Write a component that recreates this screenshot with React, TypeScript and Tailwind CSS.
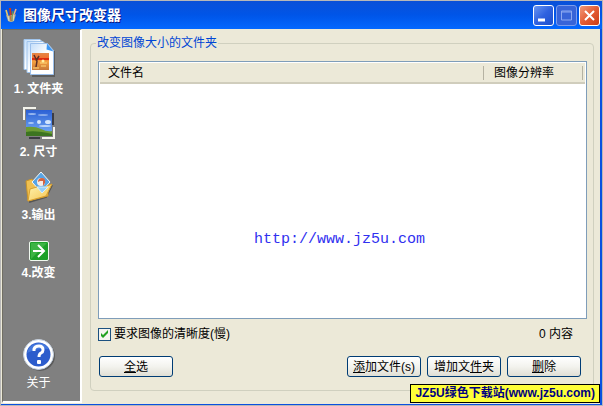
import type { ReactNode } from 'react';

const steps = [
  { id: 'folder', label: '1. 文件夹', icon: <FilesIcon />, box: 'h-[68px]' },
  { id: 'size', label: '2. 尺寸', icon: <SizeIcon />, box: 'h-16' },
  { id: 'output', label: '3.输出', icon: <OutputIcon />, box: 'h-[70px]' },
  { id: 'convert', label: '4.改变', icon: <ConvertIcon />, box: 'h-10' },
];

function BrushIcon() {
  return (
    <svg width="12" height="16" viewBox="0 0 12 16" aria-hidden="true">
      <path d="M1 3l2 7" stroke="#e8c868" strokeWidth="1.6" />
      <path d="M5 1l1 9" stroke="#c83c18" strokeWidth="2" />
      <path d="M11 2L8 10" stroke="#f0b080" strokeWidth="1.6" />
      <path d="M8 4l-1 6" stroke="#70a838" />
      <path d="M1 8l2 6q3 2 6 0l2-7-3 2-2-1-2 1z" fill="#b4ac8c" />
      <path d="M3 9l1 5M9 8l-1 6" stroke="#dcdcc0" />
      <path d="M5 8l1 6" stroke="#c86830" />
      <path d="M7 9v5" stroke="#789048" />
    </svg>
  );
}

function FilesIcon() {
  return (
    <svg width="32" height="38" viewBox="0 0 32 38" aria-hidden="true">
      <defs>
        <linearGradient id="paper" x1="0" y1="0" x2="1" y2="1">
          <stop offset="0" stopColor="#c4defa" />
          <stop offset="0.5" stopColor="#ffffff" />
        </linearGradient>
        <linearGradient id="sunset" x1="0" y1="0" x2="0" y2="1">
          <stop offset="0" stopColor="#e48848" />
          <stop offset="0.3" stopColor="#f07030" />
          <stop offset="0.5" stopColor="#f4a040" />
          <stop offset="1" stopColor="#c87838" />
        </linearGradient>
      </defs>
      <path d="M9 37h22V12" fill="none" stroke="#5c5c5c" strokeWidth="2" />
      <path d="M1 .5h16l5 5v25H1z" fill="url(#paper)" stroke="#a0c4ec" />
      <path d="M4 2.500h16l5 5v26H4z" fill="url(#paper)" stroke="#a0c4ec" />
      <path d="M7.500 4.500h17l6 7v24h-23z" fill="url(#paper)" stroke="#9cc0ec" />
      <path d="M24 4.500l6.500 8-7-2z" fill="#3c98f4" />
      <rect x="9" y="14" width="17" height="17" fill="url(#sunset)" />
      <path d="M9 20h17" stroke="#dc2c10" strokeWidth="2" />
      <path d="M11 16l3 6-1 6M16 17l-3 5" fill="none" stroke="#5c3028" strokeWidth="1.5" />
      <path d="M17 24h7M18 27h5M10 29h6" stroke="#ffd878" />
      <circle cx="20" cy="22" r="1.500" fill="#fff0a0" />
    </svg>
  );
}

function SizeIcon() {
  return (
    <svg width="32" height="33" viewBox="0 0 32 33" aria-hidden="true">
      <defs>
        <linearGradient id="sky" x1="0" y1="0" x2="0" y2="1">
          <stop offset="0" stopColor="#2c60d4" />
          <stop offset="1" stopColor="#78b0f8" />
        </linearGradient>
      </defs>
      <path d="M6 31h11M30 6v12" stroke="#3c3c44" strokeWidth="2" />
      <rect x="3" y="3" width="26" height="26" fill="url(#sky)" />
      <g fill="#d4e6fc">
        <ellipse cx="9" cy="7" rx="4" ry="1" opacity=".6" />
        <ellipse cx="20" cy="8" rx="5" ry="1" opacity=".5" />
        <ellipse cx="16" cy="15" rx="2" ry="2" />
        <ellipse cx="25" cy="15" rx="3" ry="2" />
        <ellipse cx="8" cy="16" rx="3" ry="1" opacity=".7" />
        <ellipse cx="22" cy="19" rx="6" ry="1" opacity=".8" />
      </g>
      <path d="M3 20q9-1 15 2t11 2v5H3z" fill="#6c9c34" />
      <path d="M3 25q9-2 26 2v2H3z" fill="#3c7420" />
      <path d="M1 13V1h12M19 31h12V20" fill="none" stroke="#f4f4ec" strokeWidth="2" />
    </svg>
  );
}

function OutputIcon() {
  return (
    <svg width="28" height="32" viewBox="0 0 28 32" aria-hidden="true">
      <defs>
        <linearGradient id="flap" x1="0" y1="0" x2="1" y2="1">
          <stop offset="0" stopColor="#fff4b0" />
          <stop offset="1" stopColor="#f4c450" />
        </linearGradient>
      </defs>
      <path d="M4 31l17-5 6-12" fill="none" stroke="#555" strokeWidth="2" />
      <path d="M1 10l6-2 2 3 14 1v13L3 30z" fill="#f0c050" stroke="#c89428" />
      <path d="M16 1l9 10-9 10-9-10z" fill="#58a4e4" stroke="#f4f8fc" />
      <circle cx="16" cy="11" r="4" fill="#f8ece4" />
      <path d="M13 11q0-4 4-4t3 5l-2 3v-5h-3z" fill="#d46440" />
      <path d="M3 30L5 18l7-2 3 2 12-5-6 12z" fill="url(#flap)" stroke="#d8a030" />
      <path d="M12 16h11l-6 6z" fill="#98d0f8" stroke="#d8f0fc" />
    </svg>
  );
}

function ConvertIcon() {
  return (
    <svg width="20" height="20" viewBox="0 0 20 20" aria-hidden="true">
      <rect x=".5" y=".5" width="19" height="19" rx="1.5" fill="#1ca028" stroke="#f0f8f0" />
      <path d="M2 2h16L2 18z" fill="#3cb444" />
      <path d="M4 10h11M9 4l6 6-6 6" fill="none" stroke="#fff" strokeWidth="2" />
    </svg>
  );
}

function HelpIcon() {
  return (
    <svg width="32" height="32" viewBox="0 0 32 32" aria-hidden="true">
      <circle cx="17" cy="17" r="15" fill="#5c5c5c" />
      <circle cx="15.5" cy="15.5" r="15" fill="#fff" stroke="#c4d0e0" />
      <circle cx="15.5" cy="15.5" r="12" fill="#2c5ccc" />
      <path d="M4 14a12 12 0 0 1 22-4Q15 9 4 14z" fill="#4478dc" />
      <path d="M11 12V10q1-3 5-3t4 4q0 2-2 3t-2 4" fill="none" stroke="#fff" strokeWidth="3" />
      <rect x="14" y="21" width="4" height="4" rx="1" fill="#fff" />
    </svg>
  );
}

function CaptionButton({ label, className, children }: { label: string; className: string; children: ReactNode }) {
  return (
    <button aria-label={label} className={`flex size-[21px] items-center justify-center rounded-[3px] border ${className}`}>
      <svg width="19" height="19" viewBox="0 0 19 19" fill="none" aria-hidden="true">
        {children}
      </svg>
    </button>
  );
}

function PushButton({ children }: { children: ReactNode }) {
  return (
    <button className="h-[21px] w-[74px] rounded-[3px] border border-[#003c74] bg-linear-to-b from-white via-[#f3f3ee] to-[#e0dfd5] text-center leading-[18px] whitespace-nowrap">
      {children}
    </button>
  );
}

export default function App() {
  return (
    <div className="relative flex min-h-screen flex-col border border-[#b8b8b8] bg-[#0a50e0] font-['Liberation_Sans','Noto_Sans_CJK_SC',sans-serif] text-xs text-black">
      <header className="flex h-7 items-center gap-1.5 rounded-t bg-linear-to-b from-[#0a50d8] via-[#0055e8] to-[#0468ff] pr-0.5 pl-1">
        <BrushIcon />
        <h1 className="flex-1 text-sm font-bold text-white [text-shadow:1px_1px_#0a1883]">图像尺寸改变器</h1>
        <div className="flex gap-0.5">
          <CaptionButton label="最小化" className="border-white bg-linear-to-br from-[#6a94f0] via-[#2f62e0] to-[#1c4fcc]">
            <path d="M4 14h7" stroke="#fff" strokeWidth="3" />
          </CaptionButton>
          <CaptionButton label="最大化" className="border-[#7c9cec] bg-[#3864d8]">
            <path d="M4.500 5h10v9h-10zM4.500 6h10" stroke="#8ca8f0" />
          </CaptionButton>
          <CaptionButton label="关闭" className="border-white bg-linear-to-br from-[#f09878] via-[#e45c34] to-[#cc3c14]">
            <path d="M5 5l9 9M14 5l-9 9" stroke="#fff" strokeWidth="2" />
          </CaptionButton>
        </div>
      </header>

      <div className="mr-0.5 mb-px flex flex-1 bg-[#ece9d8] pb-px pl-px">
        <nav className="flex w-20 shrink-0 flex-col border-t border-r-2 border-b-2 border-l border-t-[#716f64] border-r-white border-b-white border-l-[#716f64] bg-[#808080] pt-[9px] pr-1.5 font-bold text-white">
          {steps.map((step) => (
            <button key={step.id} className={`flex w-full flex-col items-center ${step.box}`}>
              {step.icon}
              <span className="mt-1 leading-4">{step.label}</span>
            </button>
          ))}
          <button className="mt-auto mb-2.5 flex w-full flex-col items-center font-normal">
            <HelpIcon />
            <span className="mt-1 leading-4">关于</span>
          </button>
        </nav>

        <main className="flex min-w-0 flex-1 flex-col pt-1.5 pr-1.5 pb-3 pl-2">
          <fieldset className="flex flex-1 flex-col rounded border border-[#d0d0bf] pr-1.5 pb-[13px] pl-[7px]">
            <legend className="-ml-0.5 px-px leading-4 text-[#0046d5]">改变图像大小的文件夹</legend>
            <div className="mt-2.5 flex flex-1 flex-col border border-[#7f9db9] bg-white p-px">
              <table className="w-full table-fixed">
                <thead>
                  <tr className="h-5 border-b-2 border-[#d0cdbc] bg-[#ece9d8] text-left">
                    <th className="pl-2 font-normal">文件名</th>
                    <th className="w-[102px] font-normal">
                      <span className="mr-0.5 block border-x border-[#b5b2a2] pl-2.5 leading-[14px]">图像分辨率</span>
                    </th>
                  </tr>
                </thead>
              </table>
              <p className="mt-[146px] pr-1.5 text-center font-['Liberation_Mono',monospace] text-[15px] leading-5 text-[#3030f0]">
                http://www.jz5u.com
              </p>
            </div>
            <div className="mt-[7px] flex items-center justify-between pr-3.5">
              <label className="flex items-center gap-[3px] leading-4">
                <span className="grid place-items-center">
                  <input
                    type="checkbox"
                    defaultChecked
                    className="peer col-start-1 row-start-1 size-[13px] appearance-none border border-[#1c5180] bg-[#f4f4f0]"
                  />
                  <svg
                    className="pointer-events-none invisible col-start-1 row-start-1 peer-checked:visible"
                    width="9"
                    height="9"
                    viewBox="0 0 9 9"
                    aria-hidden="true"
                  >
                    <path d="M1 3v3l2 2 5-5V0L3 5z" fill="#21a121" />
                  </svg>
                </span>
                要求图像的清晰度(慢)
              </label>
              <span className="leading-4">0 内容</span>
            </div>
            <div className="mt-3.5 flex items-center pr-1.5 pl-px">
              <PushButton><u>全</u>选</PushButton>
              <div className="ml-auto flex gap-1.5">
                <PushButton><u>添</u>加文件(s)</PushButton>
                <PushButton>增加文<u>件</u>夹</PushButton>
                <PushButton><u>删</u>除</PushButton>
              </div>
            </div>
          </fieldset>
        </main>
      </div>

      <div className="absolute right-0.5 bottom-0.5 border border-black bg-[#ffff38] px-1 text-xs leading-[17px] font-bold text-[#000080]">
        JZ5U绿色下载站(www.jz5u.com)
      </div>
    </div>
  );
}
